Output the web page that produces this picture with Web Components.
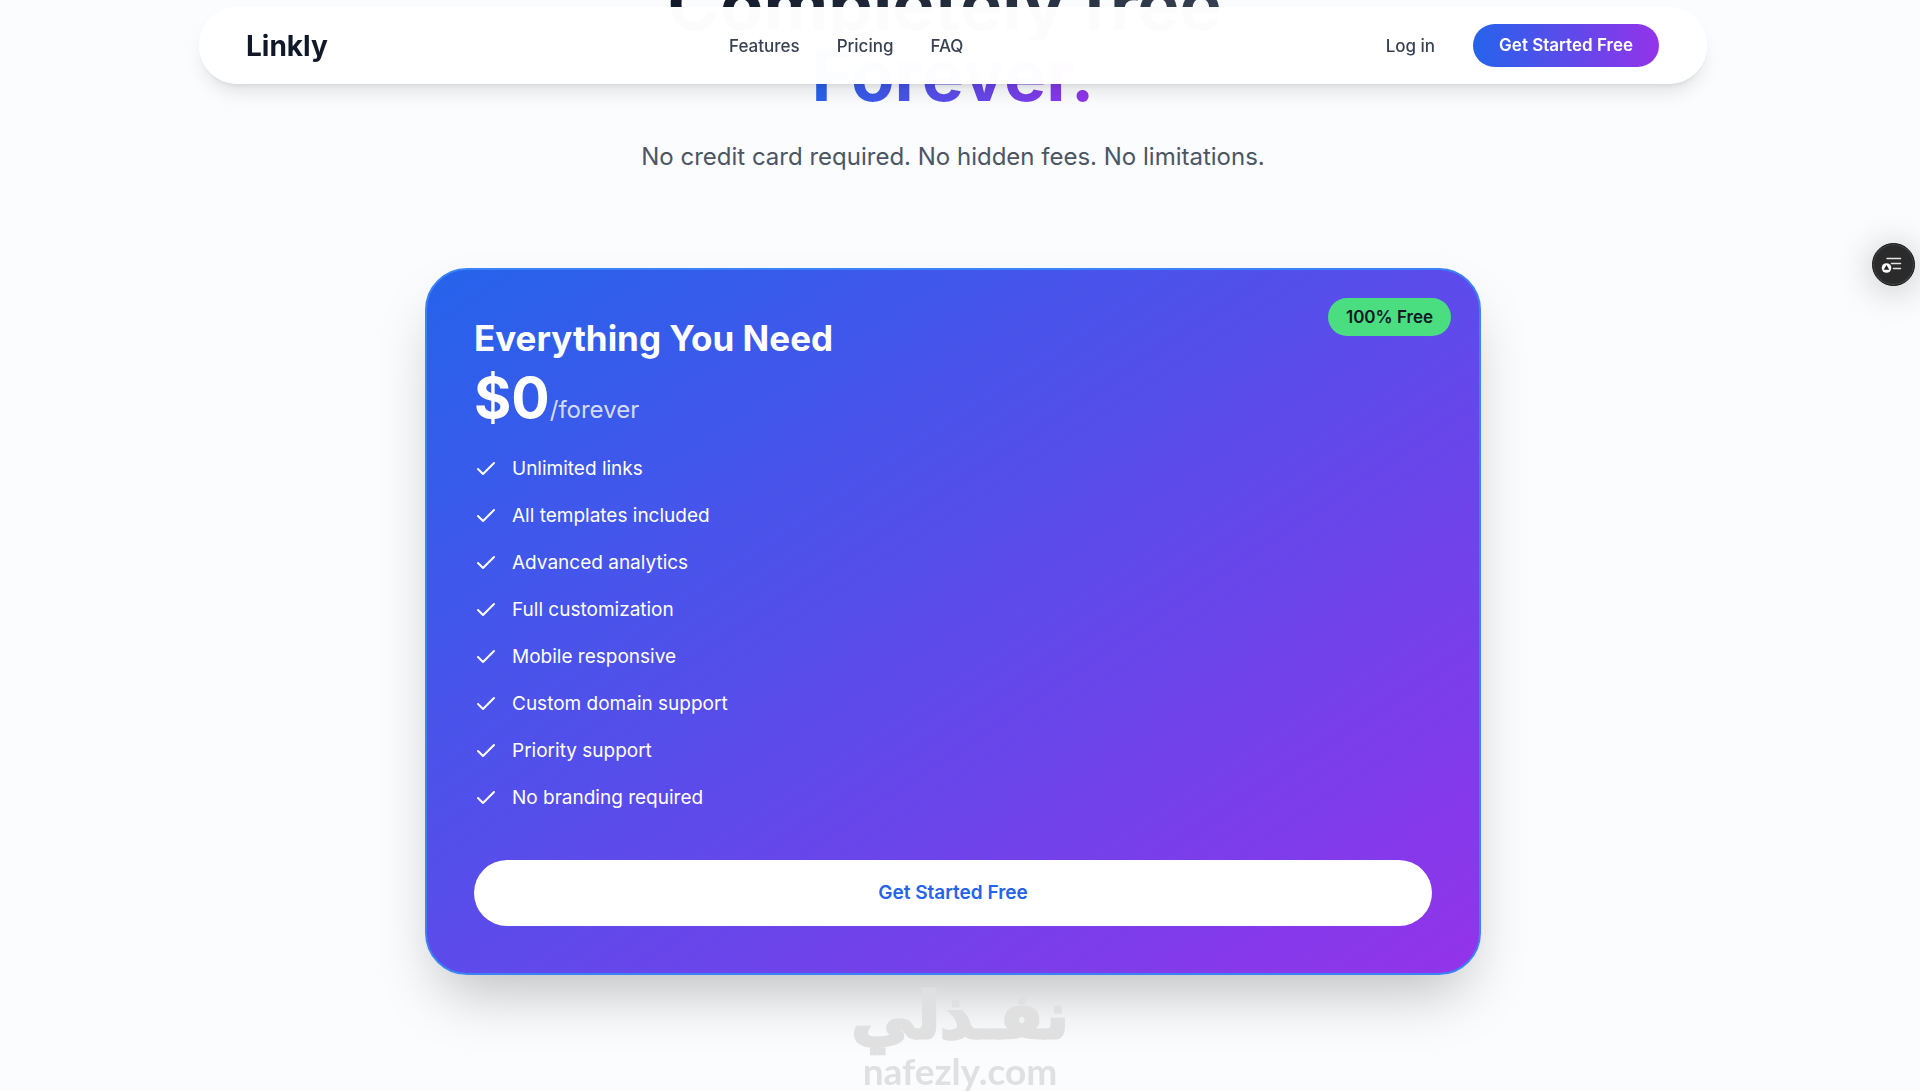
<!DOCTYPE html>
<html lang="en">
<head>
<meta charset="utf-8">
<title>Linkly</title>
<style>
html{background:#fafcfe}
body{margin:0;height:100vh;overflow:hidden;padding-right:14px;box-sizing:border-box;font-family:Inter,"Liberation Sans",sans-serif;color:#111827}
</style>
</head>
<body>
<link-nav></link-nav>
<pricing-section>
  <pricing-card heading="Everything You Need" price="$0" period="/forever" badge="100% Free">
    <check-item>Unlimited links</check-item>
    <check-item>All templates included</check-item>
    <check-item>Advanced analytics</check-item>
    <check-item>Full customization</check-item>
    <check-item>Mobile responsive</check-item>
    <check-item>Custom domain support</check-item>
    <check-item>Priority support</check-item>
    <check-item>No branding required</check-item>
  </pricing-card>
</pricing-section>
<site-mark></site-mark>
<reader-button></reader-button>
<script>
const define = (name, html, setup) => customElements.define(name, class extends HTMLElement {
  constructor() {
    super();
    this.attachShadow({ mode: 'open' }).innerHTML = html;
  }
  connectedCallback() { if (setup) setup(this, this.shadowRoot); }
});

define('link-nav', `
<style>
:host{display:block;position:fixed;top:7px;left:0;right:14px;z-index:5}
header{max-width:1508px;margin:0 auto;box-sizing:border-box;padding:17px 48px 17px 47px;display:flex;align-items:center;justify-content:space-between;border-radius:38px;background:rgba(255,255,255,.99);box-shadow:0 12px 18px -4px rgba(0,0,0,.1),0 5px 7px -5px rgba(0,0,0,.12)}
a{text-decoration:none;color:#374151;font-size:17px;line-height:24px;font-weight:500}
.brand{font-size:28px;line-height:38px;font-weight:700;color:#111827}
nav{display:flex;gap:37px;padding-right:21px}
.right{display:flex;align-items:center;gap:38px}
button{border:0;font:600 17px/24px Inter,sans-serif;color:#fff;padding:9px 26px 10px;border-radius:22px;background:linear-gradient(90deg,#2563eb,#9333ea)}
</style>
<header>
  <a class="brand" href="#">Linkly</a>
  <nav><a href="#features">Features</a><a href="#pricing">Pricing</a><a href="#faq">FAQ</a></nav>
  <div class="right"><a href="#login">Log in</a><button type="button">Get Started Free</button></div>
</header>`);

define('pricing-section', `
<style>
:host{display:block;margin-top:-31px;text-align:center}
h1{margin:0;font-size:71px;line-height:71px;font-weight:700}
h1 span{display:block;width:fit-content;margin:0 auto;white-space:pre;background:linear-gradient(90deg,#111827,#374151);background-clip:text;-webkit-background-clip:text;color:transparent}
h1 .accent{background-image:linear-gradient(90deg,#2563eb,#9333ea)}
p{margin:29px 0 94px;font-size:24px;line-height:34px;color:#4b5563}
</style>
<h1><span>Completely free </span><span class="accent">Forever.</span></h1>
<p>No credit card required. No hidden fees. No limitations.</p>
<slot></slot>`);

define('pricing-card', `
<style>
:host{display:block;position:relative;box-sizing:border-box;max-width:1056px;margin:0 auto;padding:47px;border:2px solid #3b82f6;border-radius:42px;background:linear-gradient(to bottom right,#2563eb,#9333ea);color:#fff;text-align:left;box-shadow:0 30px 59px -14px rgba(0,0,0,.25)}
h2{margin:0 0 10px;font-size:35px;line-height:42px;font-weight:700}
.price{display:flex;align-items:baseline;margin-bottom:17px;font-size:57px;line-height:57px;font-weight:700}
small{font-size:24px;font-weight:400;color:rgba(255,255,255,.8)}
.list{display:flex;flex-direction:column;gap:19px}
button{display:block;width:100%;margin-top:48px;border:0;border-radius:33px;padding:19px;background:#fff;color:#2563eb;font:600 19px/28px Inter,sans-serif}
.badge{position:absolute;top:28px;right:28px;padding:7px 18px;border-radius:19px;background:#4ade80;color:#111827;font-size:17px;line-height:24px;font-weight:600}
</style>
<span class="badge"></span>
<h2></h2>
<div class="price"><span class="amount"></span><small></small></div>
<div class="list" role="list"><slot></slot></div>
<button type="button">Get Started Free</button>`, (el, root) => {
  root.querySelector('.badge').textContent = el.getAttribute('badge');
  root.querySelector('h2').textContent = el.getAttribute('heading');
  root.querySelector('.amount').textContent = el.getAttribute('price');
  root.querySelector('small').textContent = el.getAttribute('period');
});

define('check-item', `
<style>
:host{display:flex;align-items:center;gap:14px;font-size:19px;line-height:28px}
svg{width:24px;height:24px;flex:none}
</style>
<svg viewBox="0 0 24 24" fill="none" stroke="#fff" stroke-width="2" stroke-linecap="round" stroke-linejoin="round" aria-hidden="true"><path d="M20 6 9 17l-5-5"/></svg>
<span><slot></slot></span>`, el => el.setAttribute('role', 'listitem'));

define('site-mark', `
<style>
:host{position:fixed;left:0;right:0;bottom:0;display:flex;flex-direction:column;align-items:center;color:#e0e0e0;pointer-events:none;z-index:3}
.ar{font:700 64px/70px "DejaVu Sans",sans-serif;-webkit-text-stroke:3px #e0e0e0}
.en{font:700 37px/40px Lato,sans-serif}
</style>
<span class="ar" lang="ar" dir="rtl">نفـذلي</span>
<span class="en">nafezly.com</span>`);

define('reader-button', `
<style>
:host{position:fixed;top:243px;right:5px;z-index:6}
button{display:block;width:43px;height:43px;padding:0;border:1px solid #111;border-radius:50%;background:#2b2b2b;box-shadow:inset 0 0 0 1px #484848,0 4px 36px rgba(0,0,0,.24)}
svg{display:block;width:41px;height:41px}
</style>
<button type="button" aria-label="Reader menu">
<svg viewBox="0 0 41 41" aria-hidden="true"><path d="M14 14.500h13.500M18.500 19.500h9M20.500 24.500h7" stroke="#e8e4e2" stroke-width="1.500" stroke-linecap="round"/><circle cx="13.500" cy="24" r="4.800" fill="#fff"/><path d="m13.500 21 2.800 4.800h-5.600z" fill="#222"/></svg>
</button>`);
</script>
</body>
</html>
